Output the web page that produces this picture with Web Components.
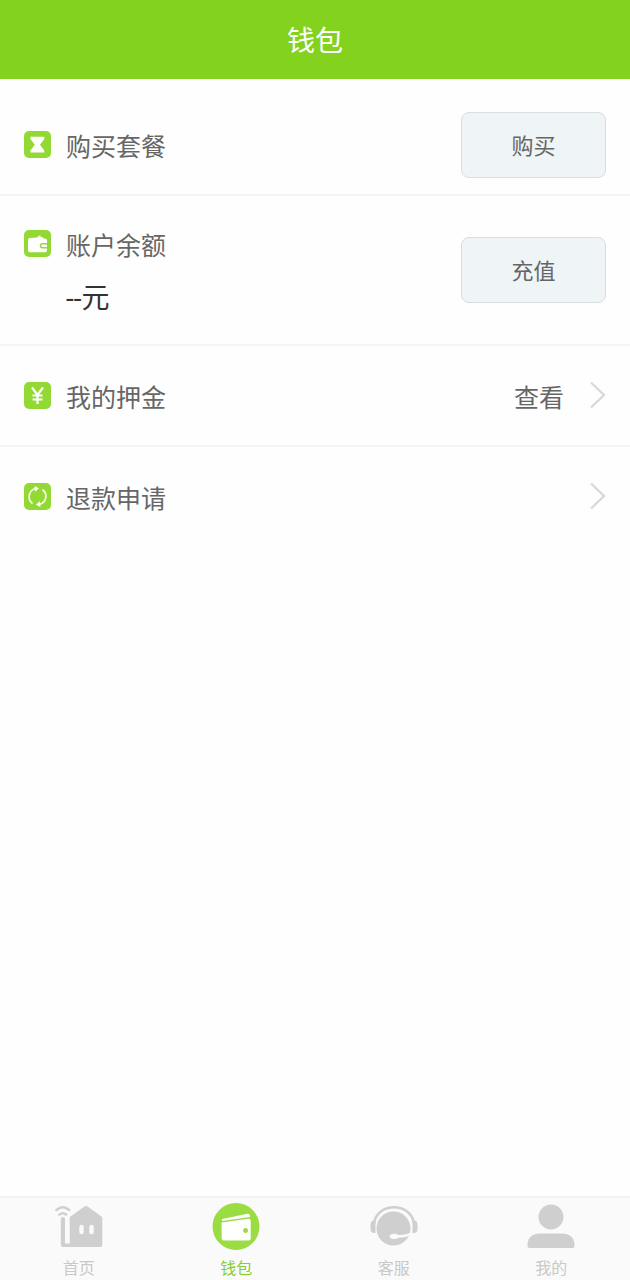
<!DOCTYPE html>
<html lang="zh-CN">
<head>
<meta charset="utf-8">
<meta name="viewport" content="width=device-width, initial-scale=1">
<title>钱包</title>
<style>
  body { margin: 0; background: #fefefe; }
</style>
</head>
<body>
<wallet-app></wallet-app>

<template id="t-app">
  <style>
    :host { display: flex; flex-direction: column; min-height: 100vh; background: #fefefe; color: #666; font-family: "Noto Sans CJK SC", sans-serif; }
    main { flex: 1; }
  </style>
  <app-header>钱包</app-header>
  <main>
    <wallet-row kind="package">
      <row-label icon="hourglass">购买套餐</row-label>
      <action-button slot="end">购买</action-button>
    </wallet-row>
    <wallet-row kind="balance">
      <row-label icon="wallet">账户余额</row-label>
      <balance-amount>--元</balance-amount>
      <action-button slot="end">充值</action-button>
    </wallet-row>
    <link-row href="#deposit">
      <row-label icon="yen">我的押金</row-label>
      <span slot="value">查看</span>
    </link-row>
    <link-row href="#refund" last>
      <row-label icon="refresh">退款申请</row-label>
    </link-row>
  </main>
  <tab-bar>
    <tab-item href="#home" icon="home">首页</tab-item>
    <tab-item href="#wallet" icon="purse" active>钱包</tab-item>
    <tab-item href="#service" icon="service">客服</tab-item>
    <tab-item href="#me" icon="me">我的</tab-item>
  </tab-bar>
</template>

<template id="t-header">
  <style>
    :host { display: block; background: #83d31e; color: #fff; }
    h1 { margin: 0; font-size: 28px; font-weight: 400; line-height: 79px; text-align: center; }
  </style>
  <header><h1><slot></slot></h1></header>
</template>

<template id="t-row">
  <style>
    :host { display: flex; align-items: center; justify-content: space-between; padding: 22px 24px; border-bottom: 2px solid #f4f4f4; }
    :host([kind="package"]) { padding: 33px 24px 16px; }
  </style>
  <div><slot></slot></div>
  <slot name="end"></slot>
</template>

<template id="t-link-row">
  <style>
    :host { display: block; border-bottom: 2px solid #f6f6f6; }
    :host([last]) { border-bottom: 0; }
    a { display: flex; align-items: center; padding: 24px 24px 23px; color: inherit; text-decoration: none; font-size: 25px; line-height: 52px; }
    .label { flex: 1; }
    svg { display: block; width: 16px; height: 28px; margin: 0 0 2px 26px; }
  </style>
  <a>
    <span class="label"><slot></slot></span>
    <slot name="value"></slot>
    <svg viewBox="0 0 16 28" aria-hidden="true"><path d="M1 1.500 14 14 1 26.500" fill="none" stroke="#d9d9d9" stroke-width="2.400"/></svg>
  </a>
</template>

<template id="t-label">
  <style>
    :host { display: flex; align-items: center; gap: 15px; font-size: 25px; line-height: 52px; }
    svg { display: block; width: 27px; height: 27px; margin-bottom: 2px; }
  </style>
  <svg viewBox="0 0 27 27" aria-hidden="true"></svg>
  <span><slot></slot></span>
</template>

<template id="t-amount">
  <style>
    :host { display: block; padding-left: 42px; font-size: 28px; line-height: 52px; color: #333; }
    span { font-family: Roboto, "Noto Sans CJK SC", sans-serif; line-height: 1; }
  </style>
  <span><slot></slot></span>
</template>

<template id="t-button">
  <style>
    :host { display: block; }
    button { display: block; box-sizing: border-box; width: 145px; height: 66px; padding: 0 0 2px; border: 1px solid #d9dddf; border-radius: 8px; background: #eff4f6; color: #666; font: inherit; font-size: 22px; }
  </style>
  <button type="button"><slot></slot></button>
</template>

<template id="t-tabs">
  <style>
    nav { display: grid; grid-template-columns: repeat(4, 1fr); border-top: 2px solid #f3f3f3; background: #fafafa; }
  </style>
  <nav><slot></slot></nav>
</template>

<template id="t-tab">
  <style>
    :host { display: block; color: #c9c9c9; }
    :host([active]) { color: #86cf2f; }
    a { display: flex; flex-direction: column; align-items: center; gap: 5px; padding-top: 4px; color: inherit; text-decoration: none; font-size: 16px; line-height: 25px; }
    svg { display: block; width: 48px; height: 48px; }
  </style>
  <a>
    <svg viewBox="0 0 48 48" aria-hidden="true"></svg>
    <span><slot></slot></span>
  </a>
</template>

<script>
  const TILE = '<rect width="27" height="27" rx="5" fill="#93d934"/>';
  const ICONS = {
    hourglass: TILE + '<path d="M6.500 5.800h13.800v2.200l-4.300 5.700 4.300 5.700v2.200h-13.800v-2.200l4.300-5.700-4.300-5.700z" fill="#fff"/>',
    wallet: TILE + '<path d="M4 10a2 2 0 0 1 1.500-2l7.500-.5 3-2.200 1 2 1.500-.3 1 1.500h1.500a2 2 0 0 1 2 2v2.500h-4.500a2.500 2.500 0 0 0 0 5.500h4.500v1.800a2 2 0 0 1-2 2h-15a2 2 0 0 1-2-2z" fill="#fff"/><path d="M18.500 14.500h4.500v2.500h-4.500a1.250 1.250 0 0 1 0-2.500z" fill="#fff"/>',
    yen: TILE + '<path d="M8 5.500l5.500 7.500L19 5.500M13.500 13v9M8.500 13.500h10M8.500 17.500h10" fill="none" stroke="#fff" stroke-width="2.200"/>',
    refresh: TILE + '<g fill="none" stroke="#fff" stroke-width="1.700" stroke-linecap="round" opacity=".9"><path d="M8 20a8.300 8.300 0 0 1 3-14.200M19 7a8.300 8.300 0 0 1-3 14.200"/></g><path d="M10.500 3l4.500 2.300-3.800 3.500zM16.500 24l-4.500-2.300 3.800-3.500z" fill="#fff"/>',
    home: '<path fill="#cfcfcf" fill-rule="evenodd" d="M29.500 4.500 15.500 14.500a2 2 0 0 0-.8 1.500v25.500h-4.700V17a2.100 2.100 0 0 0-4.200 0V43a2 2 0 0 0 2 2h37.500a2 2 0 0 0 2-2V16a2 2 0 0 0-.8-1.500L32.500 4.500a2.500 2.500 0 0 0-3 0zM24.300 25a2.200 2.200 0 0 1 4.400 0v5a2.200 2.200 0 0 1-4.400 0zM34.300 25a2.200 2.200 0 0 1 4.400 0v5a2.200 2.200 0 0 1-4.400 0z"/><path d="M1.500 8q6.300-5.500 12.600 0M4.500 12.500q3.300-2.500 6.600 0" fill="none" stroke="#cfcfcf" stroke-width="2.500" stroke-linecap="round"/>',
    purse: '<circle cx="24" cy="24.500" r="23.500" fill="#9adc41"/><path d="M10 17 35.500 11.700a2 2 0 0 1 2.200 1.300l.5 2-28.200 4z" fill="#fff"/><path fill-rule="evenodd" d="M9.500 20.500 36.500 16.800a2 2 0 0 1 2.200 2V36.500a2 2 0 0 1-2 2h-25a2 2 0 0 1-2-2zM33.500 26a2.500 2.500 0 1 0 .1 0z" fill="#fff"/>',
    service: '<circle cx="23.500" cy="26.500" r="17" fill="#cfcfcf"/><path d="M4 21C7.500 0 40.500 0 44 21" fill="none" stroke="#cfcfcf" stroke-width="2.500"/><path d="M5.500 18.500v12.500h-1a4 4 0 0 1-4-4v-4.500a4 4 0 0 1 4-4zM42.500 18.500v12.500h1a4 4 0 0 0 4-4v-4.500a4 4 0 0 0-4-4z" fill="#cfcfcf"/><path d="M19.500 34.500c0-3 6-3.500 9-1.500 5 .3 9-1 13.500-3-3 5-8 6-13 5.500-3 2.500-9 2-9.500-1z" fill="#fafafa"/>',
    me: '<g fill="#cfcfcf"><circle cx="24" cy="15" r="12.500"/><path d="M.5 44v-1.500C1 35 6 31.500 13 31.500h22c7 0 12 3.500 12.500 11V44a2 2 0 0 1-2 2h-43a2 2 0 0 1-2-2z"/></g>'
  };

  class TemplateElement extends HTMLElement {
    constructor() {
      super();
      const root = this.attachShadow({ mode: 'open' });
      root.append(document.getElementById(this.constructor.template).content.cloneNode(true));
    }
    connectedCallback() {
      const link = this.shadowRoot.querySelector('a');
      if (link) link.href = this.getAttribute('href');
      const icon = this.getAttribute('icon');
      if (icon) this.shadowRoot.querySelector('svg').innerHTML = ICONS[icon];
      if (link && this.hasAttribute('active')) link.setAttribute('aria-current', 'page');
    }
  }

  const define = (name, template) =>
    customElements.define(name, class extends TemplateElement { static template = template; });

  define('app-header', 't-header');
  define('row-label', 't-label');
  define('balance-amount', 't-amount');
  define('action-button', 't-button');
  define('wallet-row', 't-row');
  define('link-row', 't-link-row');
  define('tab-item', 't-tab');
  define('tab-bar', 't-tabs');
  define('wallet-app', 't-app');
</script>
</body>
</html>
